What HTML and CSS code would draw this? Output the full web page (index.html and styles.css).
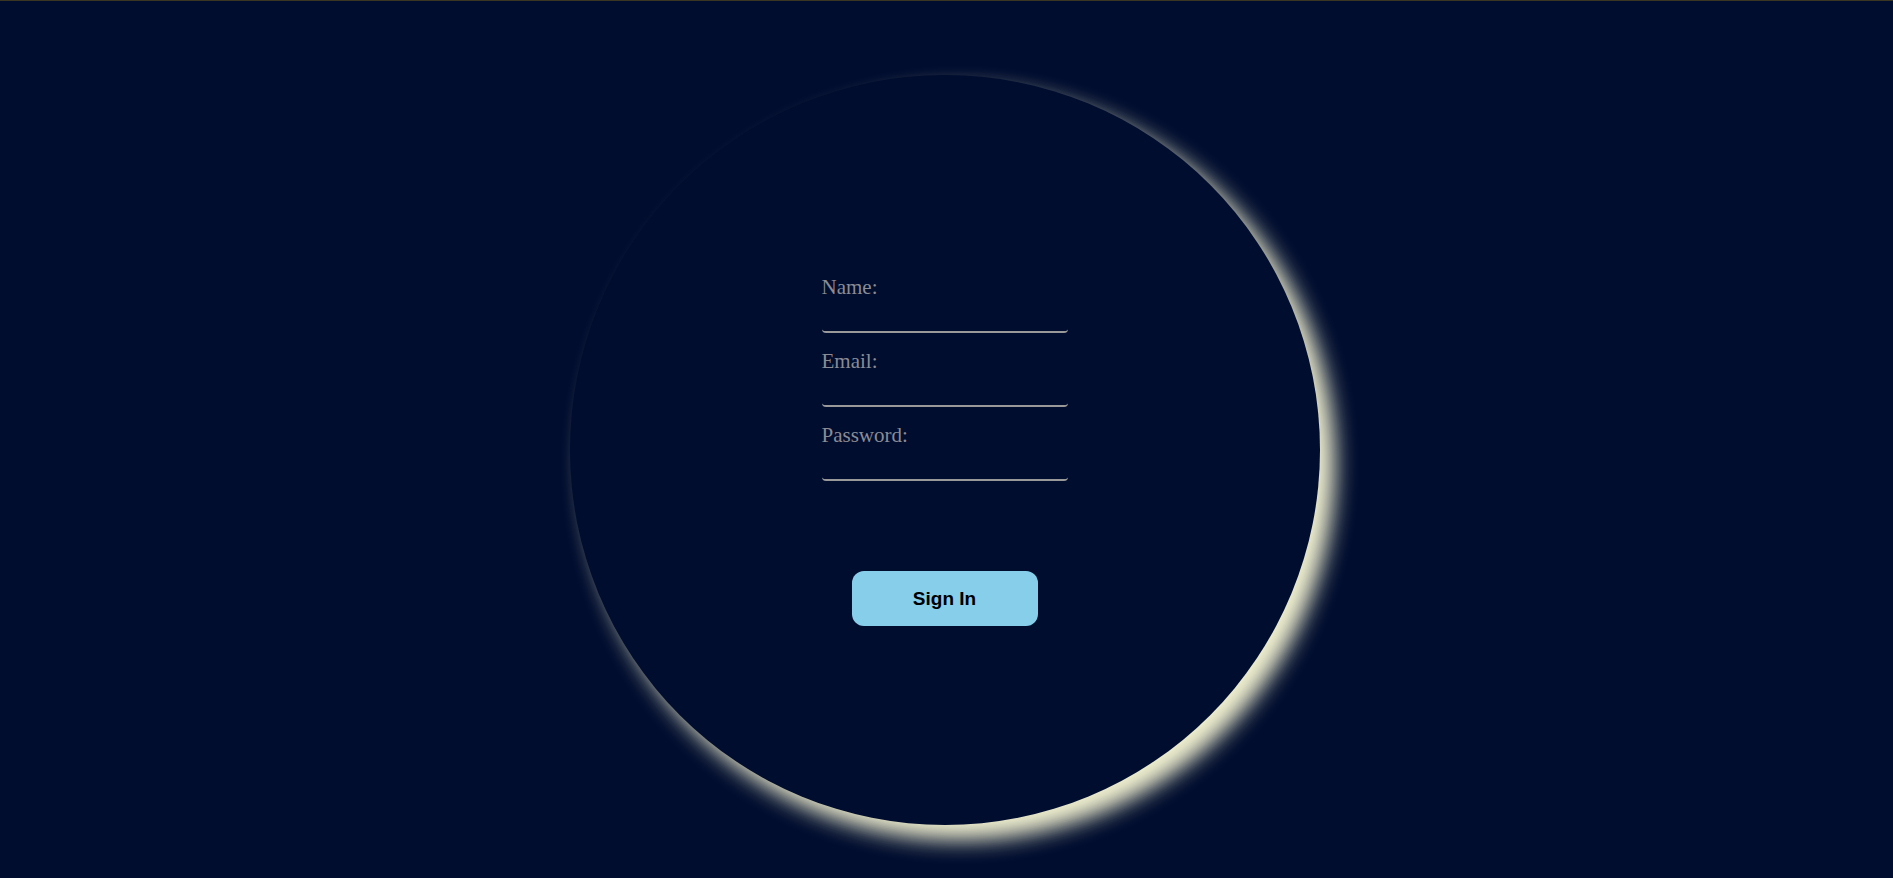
FILE: index.html
```html
<!DOCTYPE html>
<html lang="en">
<head>
<meta charset="utf-8">
<title>Sign In</title>
<link rel="stylesheet" href="styles.css">
</head>
<body>
<main class="page">
  <div class="moon">
    <form class="form">
      <label class="label" for="name">Name:</label>
      <input class="field" id="name" type="text">
      <label class="label" for="email">Email:</label>
      <input class="field" id="email" type="email">
      <label class="label" for="password">Password:</label>
      <input class="field" id="password" type="password">
      <button class="btn" type="button">Sign In</button>
    </form>
  </div>
</main>
</body>
</html>
```

FILE: styles.css
```css
html, body {
  margin: 0;
  padding: 0;
}
body {
  background: #000d2e;
  border-top: 1px solid #3b3622;
  height: 877px;
  overflow: hidden;
  font-family: "Liberation Serif", "Times New Roman", serif;
}
.page {
  display: flex;
  justify-content: center;
  padding-top: 74px;
  padding-right: 4px;
}
.moon {
  width: 750px;
  height: 750px;
  border-radius: 50%;
  background: #000d2e;
  box-shadow: 15px 15px 22px #f0f0d0;
  display: flex;
  flex-direction: column;
  align-items: center;
  justify-content: center;
}
.form {
  display: flex;
  flex-direction: column;
  width: 246px;
  margin-top: 1px;
}
.label {
  font-size: 21px;
  line-height: 24px;
  color: #8b8b95;
}
.field {
  box-sizing: border-box;
  width: 246px;
  height: 34px;
  margin: 0 0 16px 0;
  padding: 0;
  background: transparent;
  border: none;
  border-bottom: 2px solid #999;
  border-radius: 0 0 4px 4px;
  outline: none;
  color: #ccc;
  font-size: 18px;
}
.btn {
  align-self: center;
  margin-top: 74px;
  width: 186px;
  height: 55px;
  border: none;
  border-radius: 12px;
  background: #87ceeb;
  color: #000;
  font-family: "Liberation Sans", Arial, sans-serif;
  font-weight: bold;
  font-size: 19px;
  cursor: pointer;
}
```
